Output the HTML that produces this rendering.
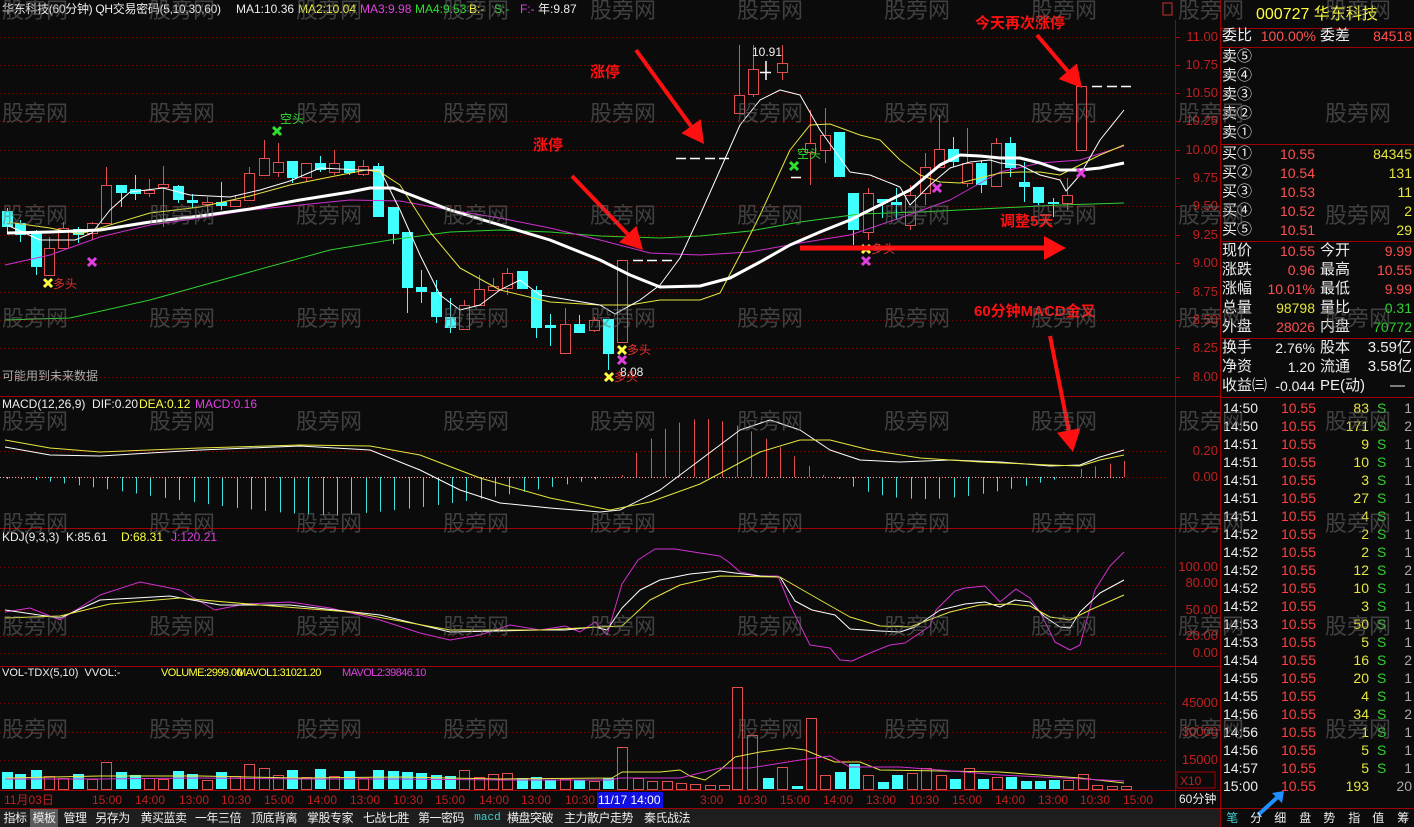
<!DOCTYPE html>
<html><head><meta charset="utf-8">
<style>
*{margin:0;padding:0;box-sizing:border-box}
body{width:1414px;height:827px;background:#0b0b0b;overflow:hidden;position:relative;font-family:"Liberation Sans","Noto Sans CJK SC",sans-serif;color:#ddd}
.a{position:absolute;white-space:nowrap;line-height:1}
#rp .a{font-size:15px}
.tab{position:absolute;top:809px;height:18px;font-size:12px;line-height:18px;color:#eee;text-align:center;white-space:nowrap;letter-spacing:-0.5px;overflow:hidden}
</style></head><body>
<svg id="s" width="1414" height="827" style="position:absolute;left:0;top:0"></svg>
<div id="t"></div>
<script>
var S=[],T=[];
function L(x1,y1,x2,y2,c,w,d){S.push('<line x1="'+x1+'" y1="'+y1+'" x2="'+x2+'" y2="'+y2+'" stroke="'+c+'" stroke-width="'+(w||1)+'"'+(d?' stroke-dasharray="'+d+'"':'')+'/>');}
function P(pts,c,w){S.push('<polyline fill="none" stroke="'+c+'" stroke-width="'+(w||1)+'" stroke-linejoin="round" points="'+pts.map(function(p){return p.join(',')}).join(' ')+'"/>');}
function R(x,y,w,h,f,s){S.push('<rect x="'+x+'" y="'+y+'" width="'+w+'" height="'+h+'" fill="'+(f||'none')+'"'+(s?' stroke="'+s+'"':'')+'/>');}
function X(x,y,c){L(x-4,y-4,x+4,y+4,c,3);L(x-4,y+4,x+4,y-4,c,3);}
function TX(x,y,s,c,fs,extra){T.push('<div class="a" style="left:'+x+'px;top:'+y+'px;color:'+c+';font-size:'+(fs||12)+'px;'+(extra||'')+'">'+s+'</div>');}
var RED='#e05050',CY='#40ffff';
[37,65,93,121,150,178,206,235,263,292,320,348,377].forEach(function(y){L(0,y+.5,1168,y+.5,'#7a0000',1,'1 3');L(1175,y+.5,1180,y+.5,'#c00000')});
[451,477].forEach(function(y){L(0,y+.5,1168,y+.5,'#7a0000',1,'1 3')});
[567,585,610,636,653].forEach(function(y){L(0,y+.5,1168,y+.5,'#7a0000',1,'1 3')});
[703,732,760].forEach(function(y){L(0,y+.5,1168,y+.5,'#7a0000',1,'1 3')});
[396,528,666,790].forEach(function(y){L(0,y+.5,1220,y+.5,'#a00000')});
L(0,808.5,1220,808.5,'#a00000');
L(1175.5,20,1175.5,808,'#a00000');L(1220.5,0,1220.5,827,'#a00000');
R(1177,772,38,16,'none','#a00000');
R(0,809,1220,18,'#1e1e1e');
var C=[[7,211,227,208,233,0],[20,223,235,220,242,0],[36,233,267,230,275,0],[49,248,275,237,275,1],[63,228,248,222,248,1],[78,229,235,227,243,0],[92,223,233,222,240,1],[106,185,223,167,223,1],[121,185,193,185,207,0],[135,189,194,175,200,0],[149,190,193,179,197,1],[163,184,187,166,227,1],[178,186,200,185,203,0],[192,200,203,194,208,0],[207,202,204,197,212,1],[221,202,206,182,210,0],[235,200,206,195,206,1],[249,173,200,167,200,1],[264,158,175,140,175,1],[278,162,172,143,177,1],[292,161,178,161,183,0],[306,163,177,163,182,1],[320,163,170,156,172,0],[334,163,172,150,175,1],[349,161,173,161,175,0],[363,166,174,160,176,1],[378,166,217,163,217,0],[393,207,234,207,244,0],[407,232,288,232,313,0],[421,287,292,270,303,0],[436,292,317,280,323,0],[450,317,328,298,333,0],[464,305,329,300,329,1],[479,289,305,275,305,1],[493,286,290,278,290,1],[507,273,288,268,295,1],[522,271,289,271,289,0],[536,290,328,286,338,0],[550,325,328,314,346,0],[565,324,353,308,353,1],[579,324,333,315,333,0],[594,320,330,317,332,1],[608,319,354,319,370,0],[622,260,342,260,342,1],
[739,95,113,45,113,1],[753,69,94,45,97,1],[782,63,72,45,80,1],[810,143,152,110,185,1],[825,135,150,108,163,1],[839,132,177,132,177,0],[853,193,230,193,245,0],[868,193,232,188,240,1],[882,199,203,199,218,0],[896,202,205,188,220,0],[910,195,225,185,230,1],[925,167,193,153,205,1],[939,149,167,115,167,1],[953,149,162,137,167,0],[967,163,183,128,187,1],[981,163,185,160,193,0],[996,143,186,138,186,1],[1010,143,168,137,177,0],[1024,182,187,162,202,0],[1038,187,203,187,205,0],[1053,202,203,198,217,0],[1067,195,203,178,210,1],[1081,86,150,86,150,1]];
C.forEach(function(c){var col=c[5]?RED:CY;L(c[0]+.5,c[3],c[0]+.5,c[4],col);
 if(c[5]){R(c[0]-4.5,c[1]+.5,10,Math.max(c[2]-c[1],1),'#0b0b0b',col)}else{R(c[0]-5,c[1],11,Math.max(c[2]-c[1],2),col)}});
[[638,260],[652,260],[667,260],[681,158],[695,158],[710,158],[724,158],[1097,86],[1112,86],[1126,86],[796,177]].forEach(function(d){L(d[0]-5,d[1]+.5,d[0]+5,d[1]+.5,'#fff',1.5)});
L(760,72.5,771,72.5,'#fff',1.5);L(766,61,766,80,'#fff',1.5);
P([[5,320],[70,318],[150,300],[250,272],[330,250],[390,240],[450,232],[500,230],[550,232],[600,236],[660,238],[700,236],[750,231],[800,222],[860,214],[920,212],[1000,208],[1060,205],[1124,203]],'#30d030');
P([[5,265],[50,255],[100,237],[150,225],[200,218],[250,210],[300,205],[350,200],[400,201],[450,210],[500,218],[550,228],[600,240],[650,253],[700,255],[750,252],[800,243],[850,235],[900,218],[950,200],[1000,172],[1040,163],[1080,160],[1124,146]],'#d030d0');
P([[7,222],[50,228],[80,234],[100,228],[150,213],[200,207],[250,196],[290,185],[330,177],[366,170],[380,172],[400,185],[430,232],[460,268],[500,290],[550,302],[600,305],[630,305],[660,300],[700,300],[720,293],[740,255],[760,215],[790,150],[810,125],[830,124],[860,135],[880,140],[900,160],[920,175],[940,182],[960,183],[980,178],[1000,173],[1020,172],[1040,172],[1060,175],[1080,165],[1100,155],[1124,145]],'#e6e640');
P([[7,225],[40,240],[75,240],[92,233],[110,210],[130,192],[163,188],[190,195],[230,197],[260,190],[290,181],[320,168],[360,170],[380,170],[400,210],[420,255],[440,295],[460,310],[480,305],[500,290],[520,280],[540,295],[570,300],[600,305],[615,314],[640,300],[660,285],[680,258],[700,215],[720,170],[740,125],[760,100],[780,90],[800,95],[820,130],[850,172],[870,175],[900,187],[910,205],[930,185],[950,168],[970,162],[990,160],[1000,163],[1020,165],[1040,175],[1060,180],[1066,191],[1080,175],[1100,140],[1124,110]],'#fff');
P([[7,233],[50,232],[100,230],[150,222],[200,216],[250,209],[300,200],[350,192],[370,188],[393,188],[450,210],[500,225],[550,240],[600,260],[630,275],[660,287],[700,286],[730,278],[760,262],[790,245],[820,232],[850,220],[880,205],[910,190],[940,165],[960,155],[980,156],[1000,158],[1020,158],[1040,163],[1060,170],[1080,170],[1100,168],[1124,163]],'#fff',3);
X(48,283,'#ffff40');X(92,262,'#e040e0');X(277,131,'#30e030');X(622,350,'#ffff40');X(622,360,'#e040e0');X(609,377,'#ffff40');X(866,249,'#ffff40');X(866,261,'#e040e0');X(937,188,'#e040e0');X(1081,173,'#e040e0');X(794,166,'#30e030');
function AR(x1,y1,x2,y2,w){var a=Math.atan2(y2-y1,x2-x1),h=22,b=12;var bx=x2-h*Math.cos(a),by=y2-h*Math.sin(a);L(x1,y1,bx,by,'#ff1010',w);
S.push('<polygon fill="#ff1010" points="'+x2+','+y2+' '+(bx+b*Math.sin(a))+','+(by-b*Math.cos(a))+' '+(bx-b*Math.sin(a))+','+(by+b*Math.cos(a))+'"/>');}
AR(636,50,704,144,4);AR(572,176,643,250,4);AR(1037,35,1082,88,4);AR(800,248,1066,248,5);AR(1050,336,1073,452,4);
function hist(x0,x1,amp,shape,col,dir){for(var x=x0;x<=x1+0.5;x+=14.35){var t=(x-x0)/(x1-x0+0.01);var h=Math.max(2,amp*shape(t));L(Math.round(x)+.5,477,Math.round(x)+.5,477+dir*h,col)}}
hist(7,608,40,function(t){var s=Math.sin(Math.PI*Math.pow(t,0.85));return t<0.55?s*(0.25+t*1.4):s;},'#40e0e0',1);
hist(622,825,58,function(t){return Math.sin(Math.PI*Math.pow(t,0.75))},RED,-1);
hist(839,1067,22,function(t){return Math.sin(Math.PI*Math.pow(t,0.7))},'#40e0e0',1);
hist(1081,1124,16,function(t){return 0.5+0.5*t},RED,-1);
L(0,477.5,1124,477.5,'#bbb',1,'1 2');
P([[5,447],[50,455],[100,456],[200,450],[300,446],[370,450],[420,470],[460,490],[500,503],[550,508],[600,512],[620,510],[660,490],[700,460],[740,430],[770,420],[800,430],[830,450],[860,460],[900,462],[950,460],[1000,462],[1050,466],[1080,465],[1100,457],[1124,450]],'#fff');
P([[5,440],[50,448],[100,452],[200,448],[300,445],[370,446],[420,455],[480,478],[550,498],[610,510],[650,502],[700,484],[760,452],[800,440],[830,440],[870,450],[920,458],[980,462],[1050,465],[1080,466],[1100,460],[1124,455]],'#e6e640');
P([[5,612],[30,608],[60,620],[100,595],[140,582],[180,590],[215,610],[245,604],[290,602],[330,608],[380,620],[420,633],[450,640],[480,635],[510,625],[540,630],[565,626],[580,632],[595,622],[607,635],[622,584],[638,560],[655,549],[675,549],[700,553],[720,556],[730,563],[740,572],[760,576],[778,576],[790,605],[810,645],[830,648],[840,660],[852,661],[870,653],[890,645],[905,643],[930,626],[936,610],[955,591],[965,588],[985,586],[1000,602],[1016,589],[1030,598],[1040,612],[1055,642],[1070,650],[1080,645],[1095,590],[1110,566],[1124,552]],'#d030d0');
P([[5,610],[60,618],[100,600],[170,596],[220,605],[290,605],[380,615],[450,632],[540,630],[565,630],[595,627],[607,630],[622,608],[640,590],[660,580],[690,574],[720,571],[735,573],[760,576],[780,577],[795,601],[812,610],[835,615],[850,629],[880,631],[900,632],[915,627],[940,610],[965,604],[985,602],[1000,607],[1015,600],[1030,602],[1045,617],[1060,627],[1070,628],[1080,612],[1100,593],[1124,580]],'#fff');
P([[5,618],[60,616],[110,604],[180,598],[260,605],[350,612],[450,630],[540,630],[600,627],[622,626],[650,600],[680,585],[720,576],[780,577],[820,600],[850,617],[880,626],[910,627],[950,612],[980,605],[1010,604],[1030,606],[1050,617],[1070,620],[1090,610],[1124,595]],'#e6e640');
var base=789;
var lh=[772,774,770,776,778,774,779,762,772,775,778,779,771,774,780,772,776,764,768,775,770,777,769,776,771,778,770,771,772,773,775,776,770,777,774,773,778,777,780,779,780,781,778,747];
for(var k=0;k<44;k++){var cc=C[k];var tp=lh[k];if(cc[5])R(cc[0]-4.5,tp+.5,10,base-tp,'#0b0b0b',RED);else R(cc[0]-5,tp,11,base-tp,CY);}
[[638,778,1],[652,781,1],[667,781,1],[681,783,1],[695,784,1],[710,785,1],[724,785,1]].forEach(function(v){R(v[0]-4.5,v[1]+.5,10,base-v[1],'#0b0b0b',RED)});
[[737,687,1],[752,735,1],[768,778,0],[782,767,1],[797,786,0],[811,718,1],[825,775,1],[840,772,0],[854,764,0],[868,775,1],[883,782,0],[897,775,0],[912,773,1],[926,768,1],[941,775,1],[955,779,0],[969,768,1],[983,779,0],[997,777,1],[1011,777,0],[1026,781,0],[1040,781,0],[1054,780,0],[1068,780,1],[1083,774,1],[1097,785,1],[1112,786,1],[1126,786,1]].forEach(function(v){if(v[2])R(v[0]-4.5,v[1]+.5,10,base-v[1],'#0b0b0b',RED);else R(v[0]-5,v[1],11,base-v[1],CY)});
P([[5,778],[100,776],[200,776],[300,778],[400,777],[500,779],[612,778],[622,772],[660,772],[680,770],[690,776],[705,780],[720,770],[735,757],[760,752],[790,748],[805,750],[817,755],[835,762],[860,762],[880,770],[1000,772],[1080,778],[1124,783]],'#e6e640');
P([[5,779],[100,779],[200,778],[300,779],[400,779],[500,780],[610,780],[620,778],[680,778],[720,768],[750,768],[800,760],[830,756],[850,767],[900,767],[940,770],[1000,775],[1124,781]],'#d030d0');
R(1163,3,9,12,'none','#c03030');
[28,47,144,241,338,397].forEach(function(y){L(1220,y+.5,1414,y+.5,'#a00000')});
L(1220,808.5,1414,808.5,'#a00000');
L(1258,815,1280,795,'#1e90ff',4);S.push('<polygon fill="#1e90ff" points="1284,791 1272,793 1282,803"/>');
document.getElementById('s').innerHTML=S.join('');
TX(2,3,'华东科技(60分钟) QH交易密码(5,10,30,60)','#eee',12,'letter-spacing:-0.3px');
TX(236,3,'MA1:10.36','#eee',12);
TX(298,3,'MA2:10.04','#ffff40',12);TX(360,3,'MA3:9.98','#e040e0',12);TX(415,3,'MA4:9.53','#30e030',12);TX(469,3,'B:-','#ffff40',12);TX(494,3,'S:-','#30e030',12);TX(520,3,'F:-','#e040e0',12);TX(538,3,'年:9.87','#eee',12);
TX(2,370,'可能用到未来数据','#aaa',12);
TX(280,113,'空头','#30e030',12);TX(797,148,'空头','#30e030',12);
TX(53,278,'多头','#e03030',12);TX(627,344,'多头','#e03030',12);TX(614,371,'多头','#e03030',12);TX(871,243,'多头','#e03030',12);
TX(752,46,'10.91','#eee',12);TX(620,366,'8.08','#eee',12);
TX(590,65,'涨停','#ff1010',15,'font-weight:bold');TX(533,138,'涨停','#ff1010',15,'font-weight:bold');
TX(975,16,'今天再次涨停','#ff1010',15,'font-weight:bold');TX(1000,214,'调整5天','#ff1010',15,'font-weight:bold');TX(974,304,'60分钟MACD金叉','#ff1010',15,'font-weight:bold');
TX(2,398,'MACD(12,26,9)&nbsp; DIF:0.20','#eee',12);TX(139,398,'DEA:0.12','#ffff40',12);TX(195,398,'MACD:0.16','#e040e0',12);
TX(2,531,'KDJ(9,3,3)&nbsp; K:85.61','#eee',12);TX(121,531,'D:68.31','#ffff40',12);TX(171,531,'J:120.21','#e040e0',12);
TX(2,668,'VOL-TDX(5,10)&nbsp; VVOL:-','#eee',11);TX(161,668,'VOLUME:2999.00','#ffff40',11,'letter-spacing:-0.6px');TX(237,668,'MAVOL1:31021.20','#ffff40',11,'letter-spacing:-0.6px');TX(342,668,'MAVOL2:39846.10','#e040e0',11,'letter-spacing:-0.6px');
[['11.00',30],['10.75',58],['10.50',86],['10.25',114],['10.00',143],['9.75',171],['9.50',199],['9.25',228],['9.00',256],['8.75',285],['8.50',313],['8.25',341],['8.00',370],['0.20',444],['0.00',470],['100.00',560],['80.00',576],['50.00',603],['20.00',629],['0.00',646],['45000',696],['30000',725],['15000',753]].forEach(function(a){T.push('<div class="a" style="right:196px;top:'+a[1]+'px;color:#c02020;font-size:13px">'+a[0]+'</div>')});
TX(1180,775,'X10','#c02020',12);TX(1179,793,'60分钟','#eee',12);
TX(4,794,'11月03日','#c02020',12);
[92,135,179,221,264,307,350,393,435,479,521,565].forEach(function(x,i){TX(x,794,['15:00','14:00','13:00','10:30'][i%4],'#c02020',12)});
T.push('<div class="a" style="left:597px;top:792px;width:66px;height:16px;background:#1010e0;color:#fff;font-size:12px;padding:2px 1px">11/17 14:00</div>');
[[700,'3:00'],[737,'10:30'],[780,'15:00'],[823,'14:00'],[866,'13:00'],[909,'10:30'],[952,'15:00'],[995,'14:00'],[1038,'13:00'],[1080,'10:30'],[1123,'15:00']].forEach(function(a){TX(a[0],794,a[1],'#c02020',12)});
[[1,28,'指标'],[30,28,'模板'],[60,30,'管理'],[92,41,'另存为'],[137,53,'黄买蓝卖'],[191,54,'一年三倍'],[247,54,'顶底背离'],[303,54,'掌股专家'],[359,54,'七战七胜'],[414,54,'第一密码'],[472,31,'macd'],[503,54,'横盘突破'],[559,79,'主力散户走势'],[641,52,'秦氏战法']].forEach(function(t,i){T.push('<div class="tab" style="left:'+t[0]+'px;width:'+t[1]+'px;'+(i==1?'background:#5a5a5a;':'')+(i==10?'color:#40d0d0;font-family:Liberation Mono,monospace;font-size:11px;letter-spacing:0;':'')+'">'+t[2]+'</div>')});
[[1222,'笔','#40d0d0'],[1246,'分','#eee'],[1270,'细','#eee'],[1295,'盘','#eee'],[1319,'势','#eee'],[1344,'指','#eee'],[1368,'值','#eee'],[1393,'筹','#eee']].forEach(function(t){T.push('<div class="tab" style="left:'+t[0]+'px;width:20px;color:'+t[2]+'">'+t[1]+'</div>')});
var RP=[];function RT(x,y,s,c,al,fs){RP.push('<div class="a" style="'+(al?'right:'+(1414-x)+'px':'left:'+x+'px')+';top:'+y+'px;color:'+c+';font-size:'+(fs||15)+'px">'+s+'</div>');}
RT(1256,7,'000727 华东科技','#ffff40',0,16);
RT(1222,28,'委比','#eee');RT(1316,29,'100.00%','#ff5050',1,14);RT(1320,28,'委差','#eee');RT(1412,29,'84518','#ff5050',1,14);
['卖⑤','卖④','卖③','卖②','卖①'].forEach(function(s,i){RT(1222,49+i*19,s,'#eee')});
[['买①','10.55','84345'],['买②','10.54','131'],['买③','10.53','11'],['买④','10.52','2'],['买⑤','10.51','29']].forEach(function(r,i){var y=146+i*19;RT(1222,y,r[0],'#eee');RT(1315,y+1,r[1],'#ff5050',1,14);RT(1412,y+1,r[2],'#e6e63c',1,14)});
[['现价','10.55','#ff5050','今开','9.99','#ff5050'],['涨跌','0.96','#ff5050','最高','10.55','#ff5050'],['涨幅','10.01%','#ff5050','最低','9.99','#ff5050'],['总量','98798','#e6e63c','量比','0.31','#30d030'],['外盘','28026','#ff5050','内盘','70772','#30d030']].forEach(function(r,i){var y=243+i*19;RT(1222,y,r[0],'#eee');RT(1315,y+1,r[1],r[2],1,14);RT(1320,y,r[3],'#eee');RT(1412,y+1,r[4],r[5],1,14)});
[['换手','2.76%','股本','3.59亿'],['净资','1.20','流通','3.58亿']].forEach(function(r,i){var y=340+i*19;RT(1222,y,r[0],'#eee');RT(1315,y+1,r[1],'#eee',1,14);RT(1320,y,r[2],'#eee');RT(1412,y,r[3],'#eee',1)});
RT(1222,378,'收益㈢','#eee');RT(1315,379,'-0.044','#eee',1,14);RT(1320,378,'PE(动)','#eee');RT(1405,378,'—','#eee',1);
var tk=[['14:50',83,1],['14:50',171,2],['14:51',9,1],['14:51',10,1],['14:51',3,1],['14:51',27,1],['14:51',4,1],['14:52',2,1],['14:52',2,1],['14:52',12,2],['14:52',10,1],['14:52',3,1],['14:53',50,1],['14:53',5,1],['14:54',16,2],['14:55',20,1],['14:55',4,1],['14:56',34,2],['14:56',1,1],['14:56',5,1],['14:57',5,1],['15:00',193,20]];
tk.forEach(function(r,i){var y=401+i*18;RT(1223,y,r[0],'#eee',0,14);RT(1316,y,'10.55','#ff4040',1,14);RT(1369,y,r[1],'#e6e63c',1,14);if(i<21)RT(1377,y,'S','#30d030',0,14);RT(1412,y,r[2],'#aaa',1,14)});
var W=[];[12,115,217,320,423,525,628,731].forEach(function(y){[2,149,296,443,590,737,884,1031,1178,1325].forEach(function(x){W.push('<div class="a" style="left:'+x+'px;top:'+(y-12)+'px;font-size:22px;color:rgba(110,110,110,0.55)">股旁网</div>')})});
document.getElementById('t').innerHTML=T.join('')+'<div id="rp">'+RP.join('')+'</div>'+W.join('');
</script>
</body></html>
